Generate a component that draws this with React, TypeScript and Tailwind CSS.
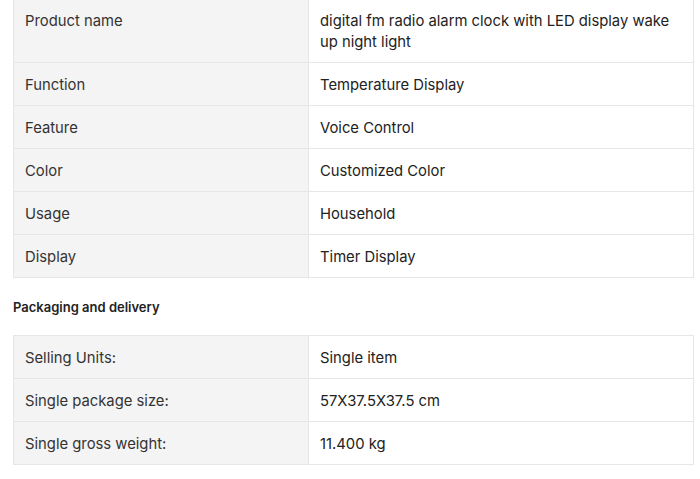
const attributes = [
  { label: 'Product name', value: 'digital fm radio alarm clock with LED display wake up night light' },
  { label: 'Function', value: 'Temperature Display' },
  { label: 'Feature', value: 'Voice Control' },
  { label: 'Color', value: 'Customized Color' },
  { label: 'Usage', value: 'Household' },
  { label: 'Display', value: 'Timer Display' },
]

const packaging = [
  { label: 'Selling Units:', value: 'Single item' },
  { label: 'Single package size:', value: '57X37.5X37.5 cm' },
  { label: 'Single gross weight:', value: '11.400 kg' },
]

function AttrTable({ rows }: { rows: { label: string; value: string }[] }) {
  return (
    <div className="border border-[#e6e6e6]">
      {rows.map((row, i) => (
        <div
          key={row.label}
          className={`grid grid-cols-[295px_1fr] ${i < rows.length - 1 ? 'border-b border-[#e6e6e6]' : ''}`}
        >
          <div className="bg-[#f4f4f4] border-r border-[#e6e6e6] px-[11px] pt-[12px] pb-[9px] text-[#333]">
            {row.label}
          </div>
          <div className="px-[11px] pt-[12px] pb-[9px] pr-[20px] text-[#222]">{row.value}</div>
        </div>
      ))}
    </div>
  )
}

export default function App() {
  return (
    <div
      className="w-[700px] h-[479px] overflow-hidden bg-white pl-[13px] pr-[6px] text-[14.8px] leading-[21px]"
      style={{ fontFamily: 'Inter, "Noto Sans", sans-serif' }}
    >
      <div className="-mt-[2px]">
        <AttrTable rows={attributes} />
      </div>
      <h3 className="mt-[19px] mb-[18px] text-[13px] leading-[20px] font-semibold text-[#222]">
        Packaging and delivery
      </h3>
      <AttrTable rows={packaging} />
    </div>
  )
}
